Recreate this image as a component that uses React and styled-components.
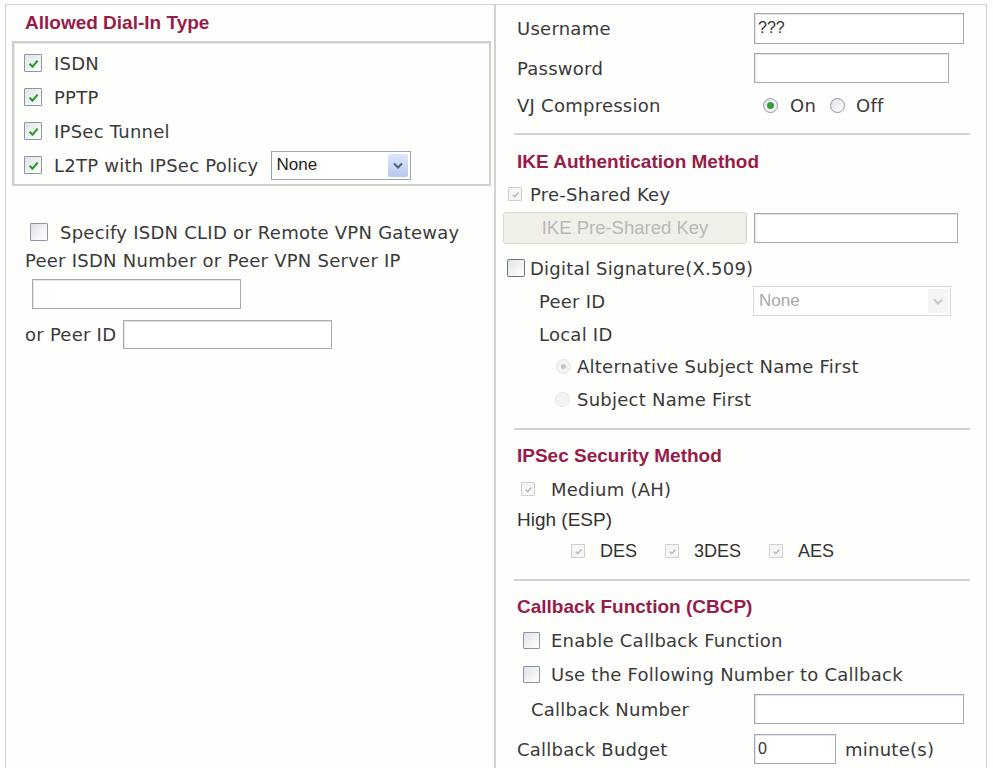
import styled, { createGlobalStyle } from 'styled-components';

const GlobalStyle = createGlobalStyle`
	body {
		margin: 0;
		background: #fefefc;
		font-family: "DejaVu Sans", Verdana, sans-serif;
		font-size: 18px;
		letter-spacing: 0.25px;
		color: #3a3a3a;
	}
`;

const Frame = styled.div`
	margin: 4px 0 0 5px;
	width: 982px;
	height: 800px;
	box-sizing: border-box;
	display: grid;
	grid-template-columns: 490px 490px;
	border: 1px solid #d4d4cc;
`;

const LeftCell = styled.div`
	border-right: 2px solid #d4d4cc;
`;

const RightCell = styled.div``;

const Heading = styled.div`
	height: ${(p) => p.h}px;
	padding-left: ${(p) => p.indent}px;
	display: flex;
	align-items: center;
	font-family: "Liberation Sans", Arial, sans-serif;
	font-weight: 700;
	font-size: 19px;
	letter-spacing: 0;
	color: #961c4a;
`;

const TypeBox = styled.div`
	margin-left: 6px;
	width: 479px;
	box-sizing: border-box;
	border: 2px solid #d0d0ca;
	box-shadow: inset 1px 1px 0 #ecece8;
	padding: 3px 0 2px 10px;
`;

const Row = styled.div`
	height: ${(p) => p.h}px;
	padding-left: ${(p) => p.indent || 0}px;
	margin-top: ${(p) => p.mt || 0}px;
	display: flex;
	align-items: center;
	white-space: nowrap;
`;

const Label = styled.span`
	flex: 0 0 ${(p) => p.w}px;
`;

const Arial = styled.span`
	font-family: "Liberation Sans", Arial, sans-serif;
	font-size: ${(p) => p.size || 18}px;
	letter-spacing: 0;
	color: #333;
`;

const CheckLabel = styled.label`
	display: inline-flex;
	align-items: center;
	gap: ${(p) => p.gap}px;
	margin-right: ${(p) => p.mr || 0}px;
`;

const Box = styled.span`
	width: ${(p) => p.size}px;
	height: ${(p) => p.size}px;
	box-sizing: border-box;
	display: inline-flex;
	align-items: center;
	justify-content: center;
	border: 1px solid ${(p) => (p.disabled ? '#cfcfcf' : p.dark ? '#6f7680' : '#8c96a3')};
	border-radius: ${(p) => (p.dark ? 2 : 1)}px;
	background: ${(p) =>
		p.disabled ? '#f6f6f4' : 'linear-gradient(135deg, #dfe3e8 0%, #f6f7f8 70%, #ffffff 100%)'};
	flex: none;
`;

const Input = styled.span`
	display: inline-flex;
	align-items: center;
	width: ${(p) => p.w}px;
	height: ${(p) => p.h || 30}px;
	box-sizing: border-box;
	margin-left: ${(p) => p.ml || 0}px;
	padding-left: 3px;
	border: 1px solid #a3abb3;
	box-shadow: inset 1px 1px 0 #e2e6ea;
	background: #fff;
	font-family: "Liberation Sans", Arial, sans-serif;
	font-size: 16px;
	letter-spacing: 0;
	color: #333;
`;

const Select = styled.span`
	display: inline-flex;
	align-items: center;
	justify-content: space-between;
	width: ${(p) => p.w}px;
	height: ${(p) => p.h}px;
	box-sizing: border-box;
	padding: 2px 2px 2px 5px;
	border: 1px solid ${(p) => (p.disabled ? '#dadada' : '#9ea7b1')};
	background: #fff;
	font-family: "Liberation Sans", Arial, sans-serif;
	font-size: 17px;
	letter-spacing: 0;
	color: ${(p) => (p.disabled ? '#a8a8a8' : '#222')};
`;

const SelectArrow = styled.span`
	width: 20px;
	align-self: stretch;
	display: flex;
	align-items: center;
	justify-content: center;
	border-radius: 2px;
	background: ${(p) => (p.disabled ? '#f4f4f4' : 'linear-gradient(#dde6fb, #b7c8ef)')};
`;

const KeyButton = styled.span`
	display: inline-flex;
	align-items: center;
	justify-content: center;
	width: 244px;
	height: 32px;
	box-sizing: border-box;
	border: 1px solid #d9d7cb;
	border-radius: 3px;
	background: #f1f0e8;
	font-family: "Liberation Sans", Arial, sans-serif;
	font-size: 18.5px;
	letter-spacing: 0;
	color: #b9b9b4;
	margin-right: 7px;
`;

const Radio = styled.span`
	width: 15px;
	height: 15px;
	box-sizing: border-box;
	border-radius: 50%;
	display: inline-flex;
	align-items: center;
	justify-content: center;
	border: 1px solid ${(p) => (p.disabled ? '#e4e4e4' : '#8e99a6')};
	background: ${(p) =>
		p.disabled ? '#f3f3f3' : 'linear-gradient(135deg, #dde2e8, #ffffff)'};
	flex: none;

	&::after {
		content: '';
		display: ${(p) => (p.on ? 'block' : 'none')};
		width: ${(p) => (p.disabled ? 5 : 7)}px;
		height: ${(p) => (p.disabled ? 5 : 7)}px;
		border-radius: 50%;
		background: ${(p) => (p.disabled ? '#c4c4c4' : '#3c9b3c')};
	}
`;

const Divider = styled.div`
	margin: ${(p) => p.top}px 0 ${(p) => p.bottom}px 18px;
	width: 456px;
	height: 2px;
	background: #d2d2ce;
`;

const Unit = styled.span`
	margin-left: 9px;
`;

const Check = ({ color, size }) => (
	<svg width={size} height={size} viewBox='0 0 10 10'>
		<path d='M2 5.2 L4.2 7.4 L8.2 2.8' fill='none' stroke={color} strokeWidth='1.7' />
	</svg>
);

const CheckBox = ({ checked, disabled, dark, size = 18 }) => (
	<Box size={size} disabled={disabled} dark={dark}>
		{checked && <Check color={disabled ? '#b8b8b8' : '#2f9b2f'} size={size - 5} />}
	</Box>
);

const Chevron = ({ color }) => (
	<svg width='10' height='7' viewBox='0 0 10 7'>
		<path d='M1 1.5 L5 5.5 L9 1.5' fill='none' stroke={color} strokeWidth='2' />
	</svg>
);

const dialTypes = ['ISDN', 'PPTP', 'IPSec Tunnel'];

const App = () => {
	return (
		<>
			<GlobalStyle />
			<Frame>
				<LeftCell>
					<Heading h={36} indent={19}>Allowed Dial-In Type</Heading>
					<TypeBox>
						{dialTypes.map((t) => (
							<Row h={34} key={t}>
								<CheckLabel gap={12}>
									<CheckBox checked />
									{t}
								</CheckLabel>
							</Row>
						))}
						<Row h={34}>
							<CheckLabel gap={12} mr={12}>
								<CheckBox checked />
								L2TP with IPSec Policy
							</CheckLabel>
							<Select w={140} h={29}>
								None
								<SelectArrow>
									<Chevron color='#4a5f88' />
								</SelectArrow>
							</Select>
						</Row>
					</TypeBox>
					<Row h={32} indent={24} mt={30}>
						<CheckLabel gap={12}>
							<CheckBox />
							Specify ISDN CLID or Remote VPN Gateway
						</CheckLabel>
					</Row>
					<Row h={24} indent={19}>Peer ISDN Number or Peer VPN Server IP</Row>
					<Row h={44} indent={26}>
						<Input w={209} />
					</Row>
					<Row h={36} indent={19}>
						or Peer ID
						<Input w={209} h={29} ml={7} />
					</Row>
				</LeftCell>

				<RightCell>
					<Row h={46} indent={21}>
						<Label w={237}>Username</Label>
						<Input w={210} h={31}>???</Input>
					</Row>
					<Row h={34} indent={21}>
						<Label w={237}>Password</Label>
						<Input w={195} />
					</Row>
					<Row h={40} indent={21}>
						<Label w={246}>VJ Compression</Label>
						<CheckLabel gap={12} mr={14}>
							<Radio on />
							On
						</CheckLabel>
						<CheckLabel gap={11}>
							<Radio />
							Off
						</CheckLabel>
					</Row>
					<Divider top={8} bottom={8} />

					<Heading h={38} indent={21}>IKE Authentication Method</Heading>
					<Row h={26} indent={12}>
						<CheckLabel gap={8}>
							<CheckBox checked disabled size={14} />
							Pre-Shared Key
						</CheckLabel>
					</Row>
					<Row h={42} indent={7}>
						<KeyButton>IKE Pre-Shared Key</KeyButton>
						<Input w={204} />
					</Row>
					<Row h={38} indent={11}>
						<CheckLabel gap={5}>
							<CheckBox dark />
							Digital Signature(X.509)
						</CheckLabel>
					</Row>
					<Row h={28} indent={43}>
						<Label w={214}>Peer ID</Label>
						<Select w={198} h={30} disabled>
							None
							<SelectArrow disabled>
								<Chevron color='#c8c8c8' />
							</SelectArrow>
						</Select>
					</Row>
					<Row h={38} indent={43}>Local ID</Row>
					<Row h={26} indent={60}>
						<CheckLabel gap={6}>
							<Radio on disabled />
							Alternative Subject Name First
						</CheckLabel>
					</Row>
					<Row h={40} indent={59}>
						<CheckLabel gap={7}>
							<Radio disabled />
							Subject Name First
						</CheckLabel>
					</Row>
					<Divider top={9} bottom={9} />

					<Heading h={34} indent={21}>IPSec Security Method</Heading>
					<Row h={32} indent={25}>
						<CheckLabel gap={16}>
							<CheckBox checked disabled size={14} />
							Medium (AH)
						</CheckLabel>
					</Row>
					<Row h={30} indent={21}>
						<Arial size={19}>High (ESP)</Arial>
					</Row>
					<Row h={32} indent={75}>
						<CheckLabel gap={15} mr={28}>
							<CheckBox checked disabled size={14} />
							<Arial>DES</Arial>
						</CheckLabel>
						<CheckLabel gap={15} mr={28}>
							<CheckBox checked disabled size={14} />
							<Arial>3DES</Arial>
						</CheckLabel>
						<CheckLabel gap={15}>
							<CheckBox checked disabled size={14} />
							<Arial>AES</Arial>
						</CheckLabel>
					</Row>
					<Divider top={12} bottom={12} />

					<Heading h={28} indent={21}>Callback Function (CBCP)</Heading>
					<Row h={38} indent={27}>
						<CheckLabel gap={11}>
							<CheckBox size={17} />
							Enable Callback Function
						</CheckLabel>
					</Row>
					<Row h={30} indent={27}>
						<CheckLabel gap={11}>
							<CheckBox size={17} />
							Use the Following Number to Callback
						</CheckLabel>
					</Row>
					<Row h={40} indent={35}>
						<Label w={223}>Callback Number</Label>
						<Input w={210} />
					</Row>
					<Row h={40} indent={21}>
						<Label w={237}>Callback Budget</Label>
						<Input w={82}>0</Input>
						<Unit>minute(s)</Unit>
					</Row>
				</RightCell>
			</Frame>
		</>
	);
};

export default App;
